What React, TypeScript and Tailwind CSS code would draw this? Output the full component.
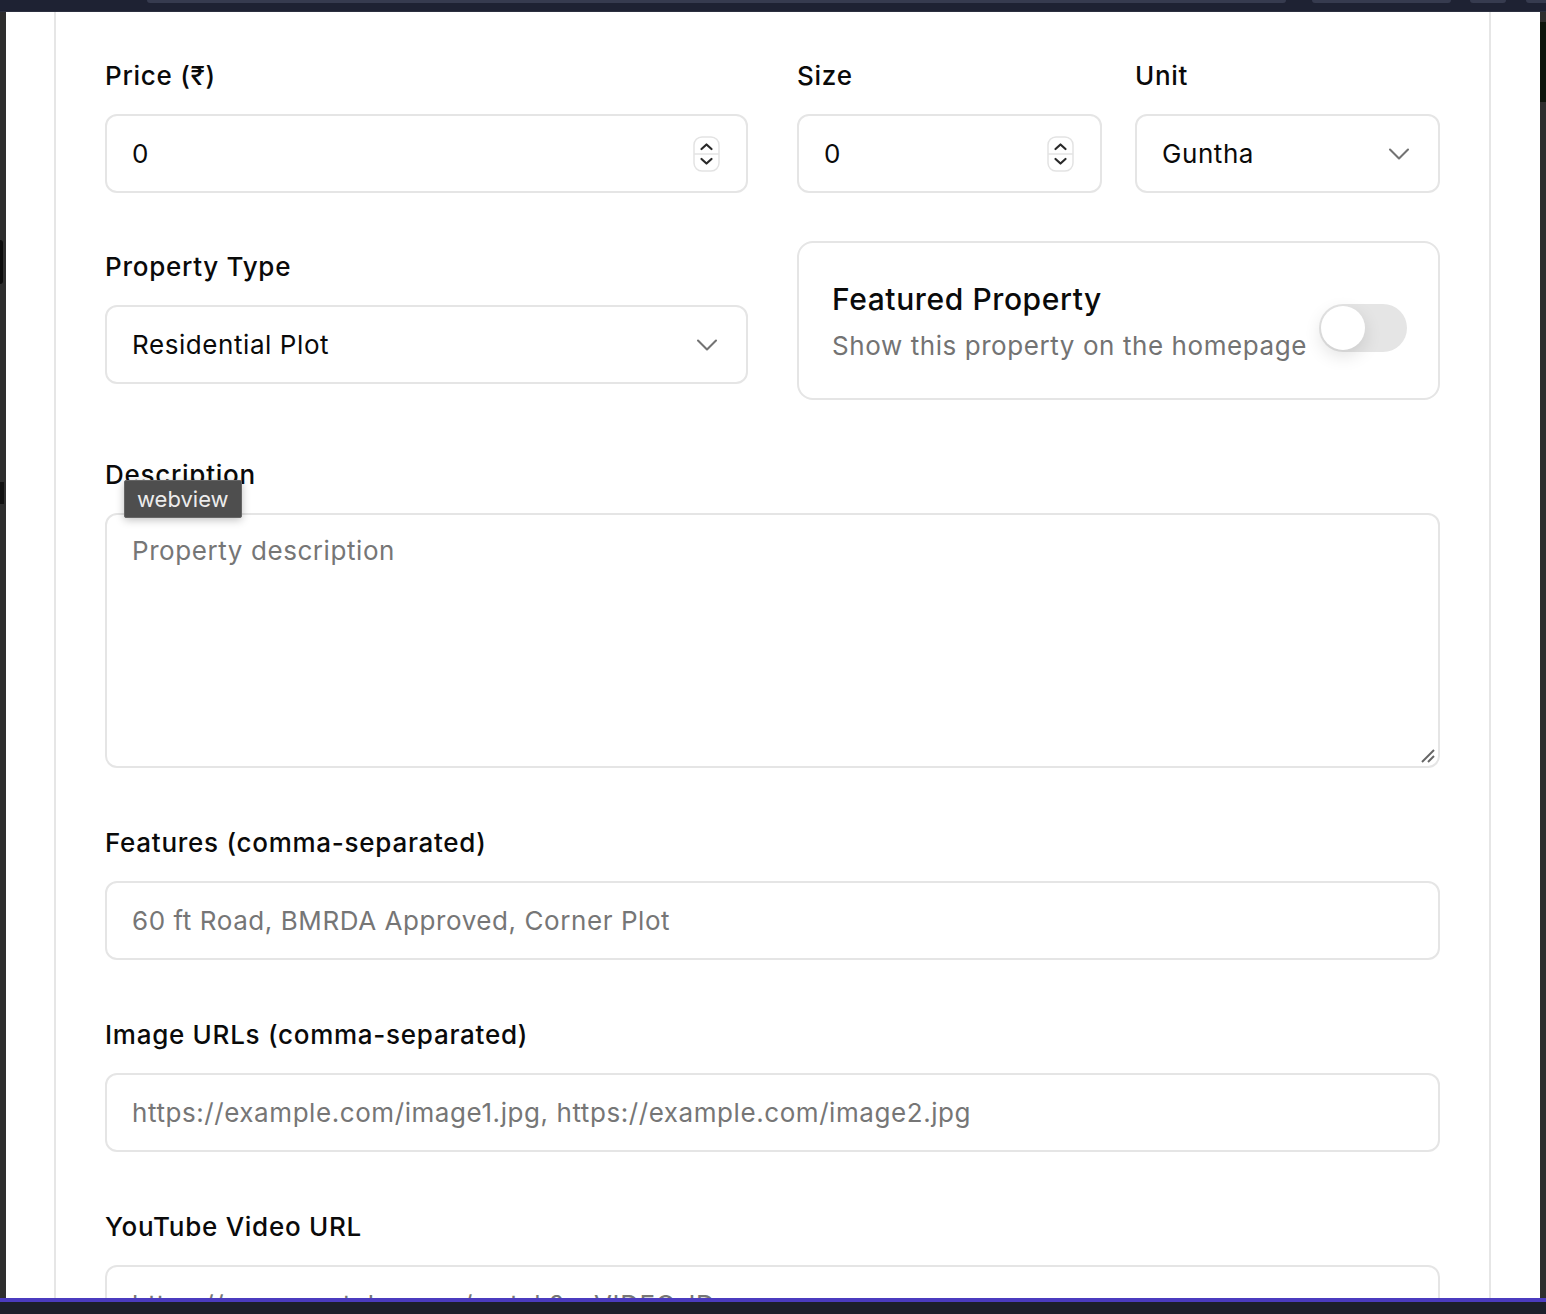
import React from 'react';
import { ChevronDown } from 'lucide-react';

const Label: React.FC<{ children: React.ReactNode }> = ({ children }) => (
  <div className="text-[26px] leading-[36px] font-medium tracking-[0.028em] text-[#0a0a0a] mb-5">{children}</div>
);

const Spinner: React.FC = () => (
  <svg width="27" height="36" viewBox="0 0 27 36" className="shrink-0">
    <rect x="1" y="1" width="25" height="34" rx="8" fill="#fff" stroke="#e3e3e3" strokeWidth="1.5" />
    <line x1="1" y1="18" x2="26" y2="18" stroke="#e3e3e3" strokeWidth="1.5" />
    <path d="M8.5 13 L13.5 8.5 L18.5 13" fill="none" stroke="#2a2a2a" strokeWidth="2.2" strokeLinecap="round" strokeLinejoin="round" />
    <path d="M8.5 23 L13.5 27.5 L18.5 23" fill="none" stroke="#2a2a2a" strokeWidth="2.2" strokeLinecap="round" strokeLinejoin="round" />
  </svg>
);

const NumberField: React.FC = () => (
  <div className="flex items-center h-[79px] rounded-[12px] border-2 border-[#e5e5e5] bg-white pl-[25px] pr-[26px]">
    <input
      readOnly
      value="0"
      className="flex-1 min-w-0 bg-transparent outline-none text-[26px] tracking-[0.022em] text-[#0a0a0a]"
    />
    <Spinner />
  </div>
);

const SelectField: React.FC<{ value: string }> = ({ value }) => (
  <div className="flex items-center justify-between h-[79px] rounded-[12px] border-2 border-[#e5e5e5] bg-white pl-[25px] pr-[21px]">
    <span className="text-[26px] tracking-[0.022em] text-[#0a0a0a]">{value}</span>
    <ChevronDown size={36} strokeWidth={1.4} className="text-[#737373]" />
  </div>
);

const TextField: React.FC<{ placeholder: string }> = ({ placeholder }) => (
  <div className="flex items-center h-[79px] rounded-[12px] border-2 border-[#e5e5e5] bg-white px-[25px]">
    <input
      readOnly
      placeholder={placeholder}
      className="flex-1 min-w-0 bg-transparent outline-none text-[26px] tracking-[0.022em] text-[#0a0a0a] placeholder:text-[#767676]"
    />
  </div>
);

export default function App() {
  return (
    <div className="w-[1546px] h-[1314px] flex flex-col bg-[#2b2b2b] overflow-hidden font-[Inter,'Noto_Sans',sans-serif]">
      {/* top bar */}
      <div className="h-[12px] shrink-0 bg-[#1e2233] border-b border-[#2c3040] flex items-start">
        <div className="ml-[147px] w-[1140px] h-[3px] rounded-b-[6px] bg-[#363b4f]" />
        <div className="ml-[26px] w-[139px] h-[3px] rounded-b-[6px] bg-[#363b4f]" />
        <div className="ml-[19px] w-[36px] h-[3px] rounded-b-[6px] bg-[#363b4f]" />
        <div className="ml-[20px] w-[20px] h-[3px] rounded-bl-[6px] bg-[#363b4f]" />
      </div>

      <div className="flex flex-1 min-h-0">
        {/* left strip */}
        <div className="w-[6px] shrink-0 bg-[#2e2e2e] flex flex-col">
          <div className="mt-[228px] h-[44px] w-[3px] bg-[#0c0c0c] rounded-r" />
          <div className="mt-[198px] h-[22px] w-[4px] bg-[#111]" />
        </div>

        {/* white panel */}
        <div className="flex-1 bg-white overflow-hidden">
          <div className="ml-[48px] mr-[49px] h-full border-x-2 border-[#e6e6e6] px-[49px] pt-[46px]">
            {/* row 1 */}
            <div className="grid grid-cols-2 gap-x-[49px]">
              <div>
                <Label>Price (₹)</Label>
                <NumberField />
              </div>
              <div className="grid grid-cols-2 gap-x-[33px]">
                <div>
                  <Label>Size</Label>
                  <NumberField />
                </div>
                <div>
                  <Label>Unit</Label>
                  <SelectField value="Guntha" />
                </div>
              </div>
            </div>

            {/* row 2 */}
            <div className="grid grid-cols-2 gap-x-[49px] items-start mt-[48px]">
              <div className="mt-[8px]">
                <Label>Property Type</Label>
                <SelectField value="Residential Plot" />
              </div>
              <div className="flex items-start justify-between rounded-[16px] border-2 border-[#e5e5e5] pl-[33px] pr-[31px] pt-[36px] pb-[34px]">
                <div>
                  <div className="text-[30px] leading-[40px] font-medium tracking-[0.02em] text-[#0a0a0a]">Featured Property</div>
                  <div className="mt-[9px] text-[26px] leading-[36px] tracking-[0.022em] text-[#737373]">Show this property on the homepage</div>
                </div>
                <div className="mt-[25px] w-[88px] h-[48px] rounded-full bg-[#e5e5e5] p-[2px] shrink-0">
                  <div className="w-[44px] h-[44px] rounded-full bg-white shadow-[0_6px_18px_rgba(0,0,0,0.12)]" />
                </div>
              </div>
            </div>

            {/* description */}
            <div className="mt-[57px] relative">
              <Label>Description</Label>
              <div className="absolute left-[19px] top-[23px] z-10 h-[38px] px-[12px] flex items-center bg-[#4e4e4e] border border-[#666] rounded-[2px] shadow-[0_2px_8px_rgba(0,0,0,0.25)] text-[22px] text-[#ececec]">
                webview
              </div>
              <div className="relative h-[255px] rounded-[12px] border-2 border-[#e5e5e5] bg-white px-[25px] pt-[18px]">
                <div className="text-[26px] leading-[36px] tracking-[0.022em] text-[#767676]">Property description</div>
                <svg width="16" height="16" viewBox="0 0 16 16" className="absolute right-[2px] bottom-[2px]">
                  <line x1="2" y1="14" x2="14" y2="2" stroke="#666" strokeWidth="2" />
                  <line x1="8" y1="14" x2="14" y2="8" stroke="#666" strokeWidth="2" />
                </svg>
              </div>
            </div>

            <div className="mt-[57px]">
              <Label>Features (comma-separated)</Label>
              <TextField placeholder="60 ft Road, BMRDA Approved, Corner Plot" />
            </div>

            <div className="mt-[57px]">
              <Label>Image URLs (comma-separated)</Label>
              <TextField placeholder="https://example.com/image1.jpg, https://example.com/image2.jpg" />
            </div>

            <div className="mt-[57px]">
              <Label>YouTube Video URL</Label>
              <TextField placeholder="https://www.youtube.com/watch?v=VIDEO_ID" />
            </div>
          </div>
        </div>

        {/* right strip */}
        <div className="w-[6px] shrink-0 bg-[#2e2e2e] flex flex-col">
          <div className="mt-[10px] h-[80px] w-[6px] bg-[#0d150c]" />
        </div>
      </div>

      {/* bottom */}
      <div className="h-[4px] shrink-0 bg-[#4b3bbf]" />
      <div className="h-[12px] shrink-0 bg-[#1c1f2b]" />
    </div>
  );
}
